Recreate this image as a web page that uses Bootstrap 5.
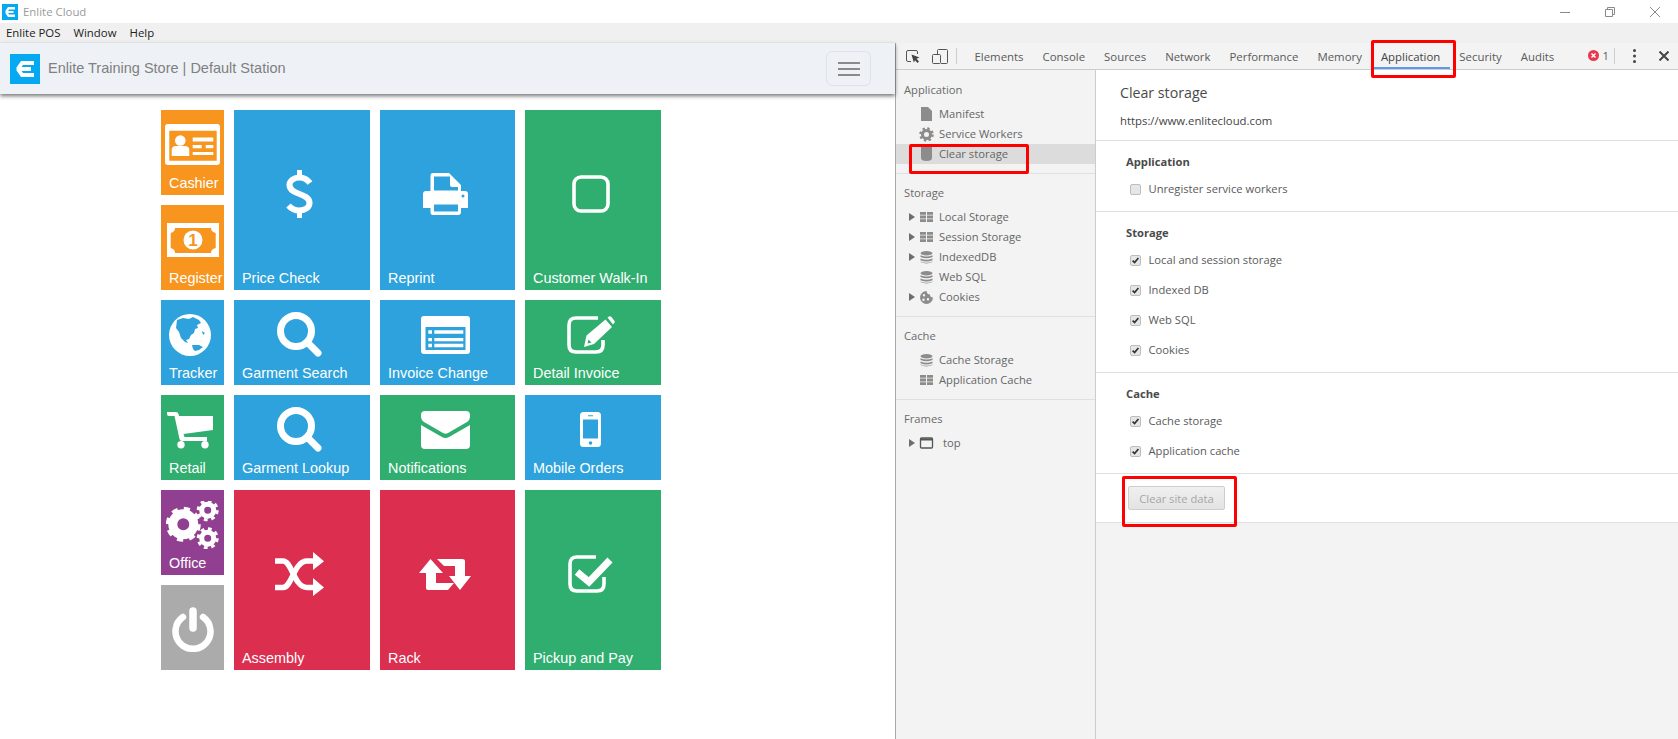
<!DOCTYPE html>
<html lang="en">
<head>
<meta charset="utf-8">
<title>Enlite Cloud</title>
<link href="https://cdn.jsdelivr.net/npm/bootstrap@5.3.0/dist/css/bootstrap.min.css" rel="stylesheet">
<style>
html,body{height:739px;overflow:hidden;background:#fff}
body{font-family:"Open Sans","Liberation Sans",sans-serif;font-size:11.2px;color:#5a5a5a}
.shell{position:relative;width:1678px;height:739px}
.titlebar{height:23px;background:#fff;padding-left:2px}
.title-text{margin-left:5px;font-size:11.4px;color:#9b9b9b}
.win-ctl{margin-left:auto;gap:35px;padding-right:18px}
.menubar{height:20px;background:#f0f0f0;padding-left:6px;gap:13px;font-size:11.4px;color:#222}
.workarea{height:696px}
.pos-pane{width:895px;flex:none;background:#fff}
.pos-nav{height:51px;background:#eef1f6;padding:0 24px 0 10px;box-shadow:0 2px 4px rgba(0,0,0,.55);flex-wrap:nowrap}
.brand-text{margin-left:8px;font-family:"Liberation Sans",Arial,sans-serif;font-size:14.5px;color:#808080}
.ham{width:45px;height:35px;padding:0;border:1px solid #dfe3e8;border-radius:6px;background:transparent;gap:4px}
.ham i{display:block;width:22px;height:2px;background:#8a8a8a}
.tile-grid{display:grid;grid-template-columns:63px 136px 135px 136px;grid-auto-rows:85px;gap:10px;margin:16px 0 0 161px}
.tile{display:flex;flex-direction:column;color:#fff;font-family:"Liberation Sans",Arial,sans-serif;font-size:14.4px;line-height:16px;padding:4px 0 0 8px;overflow:hidden;white-space:nowrap}
.tile-lg{grid-row:span 2;padding-top:8px}
.tile-ic{flex:1 1 auto;display:flex;align-items:center;justify-content:center;margin-left:-8px;padding-right:5px}
.tile-ic.ic-mid{padding-right:0}
.tile-cap{height:20px;line-height:17px}
.c-or{background:#f7951f}.c-bl{background:#2ea2dc}.c-gr{background:#30ae6f}.c-re{background:#dc2e4f}.c-pu{background:#913f90}.c-gy{background:#ababab}
.tile svg{display:block;fill:#fff}
.tile svg.ico-line{fill:none}
.devtools{flex:1 1 auto;border-left:1px solid #a8a8a8;background:#f3f3f3;min-width:0}
.dt-bar{height:27px;flex:none;border-bottom:1px solid #ccc;background:#f3f3f3}
.tool-ic{margin-left:10px}
.tool-dev{margin-left:12px}
.dt-sep{width:1px;height:16px;background:#ccc;flex:none}
.dt-tab{padding:0 9.5px;height:26px;line-height:27px;font-size:11.4px;color:#5a5a5a;white-space:nowrap}
.dt-tab-on{border-bottom:2px solid #5f98ea;color:#444}
.dt-tabs{margin-left:8px}
.dt-right{margin-left:auto;padding-right:9px}
.dt-gap-s{margin-left:5px}
.dt-gap-m{margin-left:18px}
.dt-gap-l{margin-left:23px}
.dt-body{flex:1 1 auto;min-height:0}
.dt-side{width:200px;flex:none;border-right:1px solid #ccc;background:#f3f3f3}
.side-sec{padding:9px 0;border-bottom:1px solid #e0e0e0}
.side-sec:first-child{padding:10px 0 9px}
.side-sec:last-child{border-bottom:0}
.side-h{height:20px;line-height:20px;margin-bottom:4px;padding-left:8px;color:#6a6a6a}
.tree-row{height:20px;padding-left:13px;color:#666}
.tree-row svg{flex:none;display:block}
.tree-tri{width:6px;margin-right:4px}
.tree-ic{width:15px;margin-right:5px;fill:#8c8c8c}
.tree-ic.ic-open{fill:none}
.tree-on{background:#dcdcdc}
.dt-main{flex:1 1 auto;min-width:0;background:#f3f3f3}
.main-sec{background:#fff;border-bottom:1px solid #e0e0e0;padding:11px 0 12px 30px}
.main-top{padding:13px 0 9px 24px}
.main-title{height:20px;line-height:20px;font-size:14.2px;color:#4a4a4a}
.main-url{height:20px;line-height:20px;margin-top:8px;font-size:11.35px;color:#444}
.main-h{height:20px;line-height:20px;font-weight:700;color:#4a4a4a}
.chk-row{height:20px;margin-top:10px;padding-left:4px;margin-bottom:0;color:#5a5a5a}
.main-h + .chk-row{margin-top:7px}
.chk-row .form-check-input{width:11px;height:11px;margin:0 7.500px 0 0;flex:none;border:1px solid #bdbdbd;border-radius:2px;background-color:#e6e6e6;background-size:11px 11px;opacity:1}
.chk-row .form-check-input:checked{background-color:#e6e6e6;border-color:#bdbdbd;background-image:url("data:image/svg+xml,%3Csvg xmlns='http://www.w3.org/2000/svg' viewBox='0 0 11 11'%3E%3Cpath d='M2.6 5.6l2 2 3.8-4.6' fill='none' stroke='%23333' stroke-width='1.7'/%3E%3C/svg%3E")}
.main-act{padding:12px 0 12px 32px}
.clear-btn{width:97px;height:24px;padding:1px 0 0;font-size:11.2px;line-height:22px;color:#a6a6a6;background:linear-gradient(#f0f0f0,#e3e3e3);border:1px solid #cdcdcd;border-radius:2px}
.hl{position:absolute;border:3px solid #f00;border-radius:2px;pointer-events:none}
.hl-tab{left:1371px;top:40px;width:85px;height:38px}
.hl-side{left:909px;top:144px;width:120px;height:30px}
.hl-btn{left:1122px;top:476px;width:115px;height:51px}
</style>
</head>
<body>
<div class="shell d-flex flex-column">

  <div class="titlebar d-flex align-items-center">
    <svg width="16" height="16" viewBox="0 0 16 16"><rect width="16" height="16" fill="#05a9f2"/><path d="M6 3H13V5.5H7L6.2 7H11.5V9H6.2L7 10.5H13V13H6L3.5 9.2V6.8Z" fill="#fff"/></svg>
    <span class="title-text">Enlite Cloud</span>
    <div class="win-ctl d-flex align-items-center">
      <svg width="10" height="10" viewBox="0 0 10 10"><path d="M0 5.5H10" stroke="#8a8a8a"/></svg>
      <svg width="10" height="10" viewBox="0 0 10 10" fill="none" stroke="#8a8a8a"><path d="M.5 2.5H7.5V9.5H.5Z M2.5 2.5V.5H9.5V7.5H7.5"/></svg>
      <svg width="10" height="10" viewBox="0 0 10 10" fill="none" stroke="#8a8a8a"><path d="M0 0L10 10M10 0L0 10"/></svg>
    </div>
  </div>

  <div class="menubar d-flex align-items-center"><span>Enlite POS</span><span>Window</span><span>Help</span></div>

  <div class="workarea d-flex">
    <div class="pos-pane">
      <nav class="navbar pos-nav">
        <div class="d-flex align-items-center">
          <svg width="30" height="30" viewBox="0 0 30 30"><rect width="30" height="30" fill="#05a9f2"/><path d="M11 7H24V11H13L11.5 13H21V17H11.5L13 19H24V23H11L6.5 16.5V13.5Z" fill="#fff"/></svg>
          <span class="brand-text">Enlite Training Store | Default Station</span>
        </div>
        <button class="ham d-flex flex-column align-items-center justify-content-center" type="button" aria-label="Menu"><i></i><i></i><i></i></button>
      </nav>

      <div class="tile-grid">
        <div class="tile c-or"><div class="tile-ic ic-mid"><svg width="55" height="41" viewBox="0 0 55 41"><path fill-rule="evenodd" d="M3 0H52Q55 0 55 3V38Q55 41 52 41H3Q0 41 0 38V3Q0 0 3 0ZM4.3 6.7V36.7H51.7V6.7Z"/><circle cx="15.3" cy="16.5" r="5.3"/><path d="M6.7 32V26Q6.7 22 11 22H19.5Q24.3 22 24.3 26V32Z"/><path d="M27.7 13.5H48.3V17.5H27.7ZM27.7 21H36.7V24.300H27.7ZM40.700 21H48.3V24.300H40.700ZM27.7 28H48.3V31H27.7Z"/></svg></div><div class="tile-cap">Cashier</div></div>
        <div class="tile tile-lg c-bl"><div class="tile-ic"><svg width="27" height="48" viewBox="0 0 27 48"><path d="M11 0H16V8H11ZM11 40H16V48H11Z"/><path d="M24 13C21 9 17 7.500 13.500 7.500C8 7.500 3.500 10.500 3.500 15C3.500 20 8 22 13.500 24C19 26 23.500 28 23.500 33C23.500 37.500 19 40.500 13.500 40.500C9 40.500 5.500 39 2.500 35.500" fill="none" stroke="#fff" stroke-width="6"/></svg></div><div class="tile-cap">Price Check</div></div>
        <div class="tile tile-lg c-bl"><div class="tile-ic"><svg width="45" height="42" viewBox="0 0 45 42"><path fill-rule="evenodd" d="M10 0H26L38 12V18H42Q45 18 45 21V35H38V39Q38 42 35 42H10Q7.500 42 7.500 39V35H0V21Q0 18 3 18H7.500V3Q7.500 0 10 0ZM11 3.500V17.500H35V14H29Q27 14 27 12V3.500ZM11 31.500V38.500H35V31.500ZM40 21.500A1.500 1.500 0 1 0 40 24.500A1.500 1.500 0 1 0 40 21.500Z"/></svg></div><div class="tile-cap">Reprint</div></div>
        <div class="tile tile-lg c-gr"><div class="tile-ic"><svg width="38" height="38" viewBox="0 0 38 38"><rect x="2" y="2" width="34" height="34" rx="7" fill="none" stroke="#fff" stroke-width="3.600"/></svg></div><div class="tile-cap">Customer Walk-In</div></div>

        <div class="tile c-or"><div class="tile-ic ic-mid"><svg width="52" height="34" viewBox="0 0 52 34"><path fill-rule="evenodd" d="M0 0H52V34H0ZM8 5Q8 9 3.700 10V25Q8 26 8 30H44Q44 26 48.700 25V10Q44 9 44 5Z"/><circle cx="26" cy="17" r="9.500"/><text x="26" y="23" text-anchor="middle" font-family="Liberation Sans" font-weight="700" font-size="17" style="fill:#f7951f">1</text></svg></div><div class="tile-cap">Register</div></div>

        <div class="tile c-bl"><div class="tile-ic"><svg width="42" height="42" viewBox="0 0 42 42"><circle cx="21" cy="21" r="21"/><path d="M8 6L14 4L20 5L24 3L30 6L32 9L28 11L29 14L26 15L25 19L22 21L20 25L17 26L19 29L16 28L12 24L10 18L7 14ZM23 31L30 31L34 33L30 36L26 37L24 35ZM33 17L36 19L34 21Z" fill="#2ea2dc"/></svg></div><div class="tile-cap">Tracker</div></div>
        <div class="tile c-bl"><div class="tile-ic"><svg width="45" height="45" viewBox="0 0 45 45"><circle cx="19" cy="19" r="15.500" fill="none" stroke="#fff" stroke-width="7"/><path d="M31 31L41 41" stroke="#fff" stroke-width="7" stroke-linecap="round"/></svg></div><div class="tile-cap">Garment Search</div></div>
        <div class="tile c-bl"><div class="tile-ic"><svg width="49" height="38" viewBox="0 0 49 38"><path fill-rule="evenodd" d="M3 0H46Q49 0 49 3V35Q49 38 46 38H3Q0 38 0 35V3Q0 0 3 0ZM4.500 11V34H44.500V11Z"/><path d="M7.300 14.300H11V17.700H7.300ZM7.300 22H11V25.300H7.300ZM7.300 27.700H11V31.300H7.300ZM13.300 14.300H42.300V17.700H13.300ZM13.300 22H42.300V25.300H13.300ZM13.300 27.700H42.300V31.300H13.300Z"/></svg></div><div class="tile-cap">Invoice Change</div></div>
        <div class="tile c-gr"><div class="tile-ic"><svg width="48" height="38" viewBox="0 0 48 38"><path d="M31 2H9Q2 2 2 9V29Q2 36 9 36H29Q36 36 36 29V24" fill="none" stroke="#fff" stroke-width="3.600"/><path fill-rule="evenodd" d="M17 31L19.500 19.500L38.500 3.500L45 11L27 28ZM21.500 23.500L20.500 27.500L24.500 26.500Z"/><path d="M40.500 1.500L42 .5Q43.500 0 44.500 1L47.500 5Q48.300 6 47 7.300L46 8.500Z"/></svg></div><div class="tile-cap">Detail Invoice</div></div>

        <div class="tile c-gr"><div class="tile-ic"><svg width="46" height="38" viewBox="0 0 46 38"><path d="M0 1H9Q11 1 11.500 3L12 5H46V19L16.500 23L17.500 26H40V30H15Q13 30 12.500 28L7.500 5H2Q0 5 0 3Z"/><circle cx="14" cy="33.700" r="3.700"/><circle cx="38" cy="33.700" r="3.700"/></svg></div><div class="tile-cap">Retail</div></div>
        <div class="tile c-bl"><div class="tile-ic"><svg width="45" height="45" viewBox="0 0 45 45"><circle cx="19" cy="19" r="15.500" fill="none" stroke="#fff" stroke-width="7"/><path d="M31 31L41 41" stroke="#fff" stroke-width="7" stroke-linecap="round"/></svg></div><div class="tile-cap">Garment Lookup</div></div>
        <div class="tile c-gr"><div class="tile-ic"><svg width="49" height="38" viewBox="0 0 49 38"><path d="M4 0H45Q49 0 49 4V5Q49 9 46 11L27 22Q24.500 23.500 22 22L3 11Q0 9 0 5V4Q0 0 4 0ZM0 14L21 26Q24.500 28 28 26L49 14V34Q49 38 45 38H4Q0 38 0 34Z"/></svg></div><div class="tile-cap">Notifications</div></div>
        <div class="tile c-bl"><div class="tile-ic"><svg width="21" height="35" viewBox="0 0 21 35"><path fill-rule="evenodd" d="M3.500 0H17.500Q21 0 21 3.500V31.500Q21 35 17.500 35H3.500Q0 35 0 31.500V3.500Q0 0 3.500 0ZM3 7.500V26.500H18V7.500ZM8 3.200V4.200H13V3.200ZM10.500 29.200A1.800 1.800 0 1 0 10.500 32.800A1.800 1.800 0 1 0 10.500 29.200Z"/></svg></div><div class="tile-cap">Mobile Orders</div></div>

        <div class="tile c-pu"><div class="tile-ic ic-mid"><svg class="ico-line" width="53" height="48" viewBox="0 0 53 48" stroke="#fff"><circle cx="17.300" cy="23.300" r="10.500" stroke-width="9"/><circle cx="17.300" cy="23.300" r="15.500" stroke-width="4" stroke-dasharray="6.090 6.090"/><circle cx="41.700" cy="9.300" r="6" stroke-width="5"/><circle cx="41.700" cy="9.300" r="9.500" stroke-width="3" stroke-dasharray="3.730 3.730"/><circle cx="41.700" cy="37.300" r="6" stroke-width="5"/><circle cx="41.700" cy="37.300" r="9.500" stroke-width="3" stroke-dasharray="3.730 3.730"/></svg></div><div class="tile-cap">Office</div></div>
        <div class="tile tile-lg c-re"><div class="tile-ic"><svg width="49" height="44" viewBox="0 0 49 44"><g fill="none" stroke="#fff" stroke-width="5.500"><path d="M0 9H8C17 9 19 35.500 32 35.500H40"/><path d="M0 35.500H8C17 35.500 19 9 32 9H40"/></g><path d="M38 0L49 9.300L38 18ZM38 26L49 35.500L38 44Z"/></svg></div><div class="tile-cap">Assembly</div></div>
        <div class="tile tile-lg c-re"><div class="tile-ic"><svg width="52" height="31" viewBox="0 0 52 31"><path d="M11.500 0L24 14H17V24H35L29 31H9Q7 31 7 29V14H0ZM18 0H43Q46 0 46 2V17H52L41 31L30 17H36V7H25Z"/></svg></div><div class="tile-cap">Rack</div></div>
        <div class="tile tile-lg c-gr"><div class="tile-ic"><svg width="46" height="38" viewBox="0 0 46 38"><path d="M28 2H9Q2 2 2 9V29Q2 36 9 36H29Q36 36 36 29V22" fill="none" stroke="#fff" stroke-width="3.600"/><path d="M9 17L21 27L42 5" fill="none" stroke="#fff" stroke-width="7"/></svg></div><div class="tile-cap">Pickup and Pay</div></div>

        <div class="tile c-gy"><div class="tile-ic ic-mid"><svg class="ico-line" width="42" height="45" viewBox="0 0 42 45" stroke="#fff" stroke-linecap="round"><path d="M11 10A17.500 17.500 0 1 0 31 10" stroke-width="6.500"/><path d="M21 4V21" stroke-width="7.500"/></svg></div></div>
      </div>
    </div>

    <div class="devtools d-flex flex-column">
      <div class="dt-bar d-flex align-items-center">
        <svg class="tool-ic" width="14" height="13" viewBox="0 0 14 13" fill="none"><path d="M5 11.500H2Q.5 11.500 .5 10V2Q.5 .5 2 .5H10Q11.500 .5 11.500 2V4" stroke="#555"/><path d="M5.500 4.500L13.500 7.500L10.500 8.800L13 11.500L11.500 13L9 10.300L7.800 12.500Z" fill="#444"/></svg>
        <svg class="tool-dev" width="16" height="15" viewBox="0 0 16 15" fill="none" stroke="#555"><path d="M5.500 5V1.500Q5.500 .5 6.500 .5H14.500Q15.500 .5 15.500 1.500V13.500Q15.500 14.500 14.500 14.500H9"/><rect x=".5" y="5.500" width="8" height="9" rx="1"/></svg>
        <span class="dt-sep ms-2"></span>
        <div class="dt-tabs d-flex">
          <span class="dt-tab">Elements</span><span class="dt-tab">Console</span><span class="dt-tab">Sources</span><span class="dt-tab">Network</span><span class="dt-tab">Performance</span><span class="dt-tab">Memory</span><span class="dt-tab dt-tab-on">Application</span><span class="dt-tab">Security</span><span class="dt-tab">Audits</span>
        </div>
        <div class="dt-right d-flex align-items-center">
          <svg width="11" height="11" viewBox="0 0 11 11"><circle cx="5.500" cy="5.500" r="5.500" fill="#e8384f"/><path d="M3.500 3.500L7.500 7.500M7.500 3.500L3.500 7.500" stroke="#fff" stroke-width="1.500"/></svg>
          <span class="ms-1">1</span>
          <span class="dt-sep dt-gap-s"></span>
          <svg class="dt-gap-m" width="3" height="14" viewBox="0 0 3 14" fill="#444"><circle cx="1.500" cy="1.500" r="1.500"/><circle cx="1.500" cy="7" r="1.500"/><circle cx="1.500" cy="12.500" r="1.500"/></svg>
          <svg class="dt-gap-l" width="10" height="10" viewBox="0 0 10 10" fill="none" stroke="#444" stroke-width="2"><path d="M.5 .5L9.500 9.500M9.500 .5L.5 9.500"/></svg>
        </div>
      </div>

      <div class="dt-body d-flex">
        <aside class="dt-side">
          <div class="side-sec">
            <div class="side-h">Application</div>
            <div class="tree-row d-flex align-items-center"><span class="tree-tri"></span><svg class="tree-ic" height="14" viewBox="0 0 15 14"><path d="M2 0H9L13 4V14H2Z"/></svg><span>Manifest</span></div>
            <div class="tree-row d-flex align-items-center"><span class="tree-tri"></span><svg class="tree-ic ic-open" height="15" viewBox="0 0 15 15" stroke="#8c8c8c"><circle cx="7.500" cy="7.500" r="4" stroke-width="3"/><circle cx="7.500" cy="7.500" r="6" stroke-width="2.500" stroke-dasharray="2.360 2.360"/></svg><span>Service Workers</span></div>
            <div class="tree-row tree-on d-flex align-items-center"><span class="tree-tri"></span><svg class="tree-ic" height="14" viewBox="0 0 15 14"><path d="M2 0H13V11Q13 14 7.500 14Q2 14 2 11Z"/></svg><span>Clear storage</span></div>
          </div>
          <div class="side-sec">
            <div class="side-h">Storage</div>
            <div class="tree-row d-flex align-items-center"><svg class="tree-tri" height="8" viewBox="0 0 6 8"><path d="M0 0L6 4L0 8Z" fill="#6e6e6e"/></svg><svg class="tree-ic" height="10" viewBox="0 0 15 10"><path d="M1 0H7V2.800H1ZM8 0H14V2.800H8ZM1 3.600H7V6.400H1ZM8 3.600H14V6.400H8ZM1 7.200H7V10H1ZM8 7.200H14V10H8Z"/></svg><span>Local Storage</span></div>
            <div class="tree-row d-flex align-items-center"><svg class="tree-tri" height="8" viewBox="0 0 6 8"><path d="M0 0L6 4L0 8Z" fill="#6e6e6e"/></svg><svg class="tree-ic" height="10" viewBox="0 0 15 10"><path d="M1 0H7V2.800H1ZM8 0H14V2.800H8ZM1 3.600H7V6.400H1ZM8 3.600H14V6.400H8ZM1 7.200H7V10H1ZM8 7.200H14V10H8Z"/></svg><span>Session Storage</span></div>
            <div class="tree-row d-flex align-items-center"><svg class="tree-tri" height="8" viewBox="0 0 6 8"><path d="M0 0L6 4L0 8Z" fill="#6e6e6e"/></svg><svg class="tree-ic" height="13" viewBox="0 0 15 13"><ellipse cx="7.500" cy="2.200" rx="6" ry="2.200"/><path d="M1.500 4.200Q7.500 6.800 13.500 4.200V6Q7.500 8.600 1.500 6ZM1.500 7.400Q7.500 10 13.500 7.400V9.200Q7.500 11.800 1.500 9.200ZM1.500 10.400Q7.500 13 13.500 10.400V11Q7.500 13.800 1.500 11Z"/></svg><span>IndexedDB</span></div>
            <div class="tree-row d-flex align-items-center"><span class="tree-tri"></span><svg class="tree-ic" height="13" viewBox="0 0 15 13"><ellipse cx="7.500" cy="2.200" rx="6" ry="2.200"/><path d="M1.500 4.200Q7.500 6.800 13.500 4.200V6Q7.500 8.600 1.500 6ZM1.500 7.400Q7.500 10 13.500 7.400V9.200Q7.500 11.800 1.500 9.200ZM1.500 10.400Q7.500 13 13.500 10.400V11Q7.500 13.800 1.500 11Z"/></svg><span>Web SQL</span></div>
            <div class="tree-row d-flex align-items-center"><svg class="tree-tri" height="8" viewBox="0 0 6 8"><path d="M0 0L6 4L0 8Z" fill="#6e6e6e"/></svg><svg class="tree-ic" height="13" viewBox="0 0 15 13"><path fill-rule="evenodd" d="M7.500 0A6.500 6.500 0 1 0 14 6.500Q11 6.500 11 3.500Q8 3.500 7.500 0ZM5 3A1.200 1.200 0 1 0 5 5.400A1.200 1.200 0 1 0 5 3ZM4.500 7.500A1.200 1.200 0 1 0 4.500 9.900A1.200 1.200 0 1 0 4.500 7.500ZM9 7A1.200 1.200 0 1 0 9 9.400A1.200 1.200 0 1 0 9 7Z"/></svg><span>Cookies</span></div>
          </div>
          <div class="side-sec">
            <div class="side-h">Cache</div>
            <div class="tree-row d-flex align-items-center"><span class="tree-tri"></span><svg class="tree-ic" height="13" viewBox="0 0 15 13"><ellipse cx="7.500" cy="2.200" rx="6" ry="2.200"/><path d="M1.500 4.200Q7.500 6.800 13.500 4.200V6Q7.500 8.600 1.500 6ZM1.500 7.400Q7.500 10 13.500 7.400V9.200Q7.500 11.800 1.500 9.200ZM1.500 10.400Q7.500 13 13.500 10.400V11Q7.500 13.800 1.500 11Z"/></svg><span>Cache Storage</span></div>
            <div class="tree-row d-flex align-items-center"><span class="tree-tri"></span><svg class="tree-ic" height="10" viewBox="0 0 15 10"><path d="M1 0H7V2.800H1ZM8 0H14V2.800H8ZM1 3.600H7V6.400H1ZM8 3.600H14V6.400H8ZM1 7.200H7V10H1ZM8 7.200H14V10H8Z"/></svg><span>Application Cache</span></div>
          </div>
          <div class="side-sec">
            <div class="side-h">Frames</div>
            <div class="tree-row d-flex align-items-center"><svg class="tree-tri" height="8" viewBox="0 0 6 8"><path d="M0 0L6 4L0 8Z" fill="#6e6e6e"/></svg><svg class="tree-ic ic-open" height="12" viewBox="0 0 15 12"><rect x="1.500" y="1" width="12" height="10" rx="1" stroke="#555" stroke-width="1.300"/><path d="M1.500 2.500H13.500" stroke="#555" stroke-width="2"/></svg><span class="ms-1">top</span></div>
          </div>
        </aside>

        <main class="dt-main d-flex flex-column">
          <div class="main-sec main-top">
            <div class="main-title">Clear storage</div>
            <div class="main-url">https://www.enlitecloud.com</div>
          </div>
          <div class="main-sec">
            <div class="main-h">Application</div>
            <label class="chk-row d-flex align-items-center"><input class="form-check-input" type="checkbox">Unregister service workers</label>
          </div>
          <div class="main-sec">
            <div class="main-h">Storage</div>
            <label class="chk-row d-flex align-items-center"><input class="form-check-input" type="checkbox" checked>Local and session storage</label>
            <label class="chk-row d-flex align-items-center"><input class="form-check-input" type="checkbox" checked>Indexed DB</label>
            <label class="chk-row d-flex align-items-center"><input class="form-check-input" type="checkbox" checked>Web SQL</label>
            <label class="chk-row d-flex align-items-center"><input class="form-check-input" type="checkbox" checked>Cookies</label>
          </div>
          <div class="main-sec">
            <div class="main-h">Cache</div>
            <label class="chk-row d-flex align-items-center"><input class="form-check-input" type="checkbox" checked>Cache storage</label>
            <label class="chk-row d-flex align-items-center"><input class="form-check-input" type="checkbox" checked>Application cache</label>
          </div>
          <div class="main-sec main-act">
            <button class="btn clear-btn" type="button">Clear site data</button>
          </div>
        </main>
      </div>
    </div>
  </div>

  <div class="hl hl-tab"></div>
  <div class="hl hl-side"></div>
  <div class="hl hl-btn"></div>
</div>
<script src="https://cdn.jsdelivr.net/npm/bootstrap@5.3.0/dist/js/bootstrap.bundle.min.js"></script>
</body>
</html>
